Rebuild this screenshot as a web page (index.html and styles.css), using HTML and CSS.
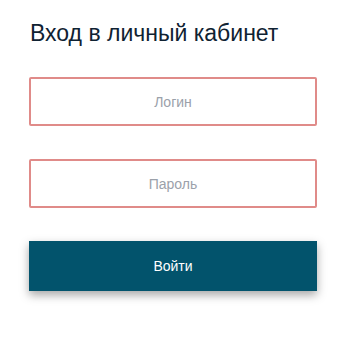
FILE: index.html
```html
<!DOCTYPE html>
<html lang="ru">
  <head>
    <meta charset="UTF-8" />
    <meta name="viewport" content="width=device-width,initial-scale=1.0" />
    <title>Вход</title>
    <link rel="stylesheet" href="styles.css">
  </head>
  <body>
    <form class="login" name="login">
      <h2 class="login-title">Вход в личный кабинет</h2>
      <input class="login-input" type="text" name="login" placeholder="Логин">
      <input class="login-input" type="password" name="password" placeholder="Пароль">
      <button class="login-button" type="submit">Войти</button>
    </form>
  </body>
</html>
```

FILE: styles.css
```css
body {
  margin: 0;
  background: #fff;
  font-family: "Liberation Sans", Arial, sans-serif;
}
.login {
  width: 288px;
  padding: 20px 0 40px 29px;
  display: flex;
  flex-direction: column;
}
.login-title {
  margin: 0 0 31px 1px;
  font-size: 23px;
  font-weight: normal;
  line-height: 26px;
  color: #0f2232;
}
.login-input {
  box-sizing: border-box;
  height: 49px;
  margin: 0 0 33px;
  padding: 0 10px;
  border: 2px solid #e08b89;
  border-radius: 2px;
  font-family: inherit;
  font-size: 14px;
  text-align: center;
  color: #333;
  outline: none;
}
.login-input::placeholder {
  color: #9ba1aa;
}
.login-button {
  height: 50px;
  border: none;
  background: #02536c;
  color: #fff;
  font-family: inherit;
  font-size: 14px;
  cursor: pointer;
  box-shadow: 0 4px 9px rgba(0, 0, 0, 0.35);
}
```
